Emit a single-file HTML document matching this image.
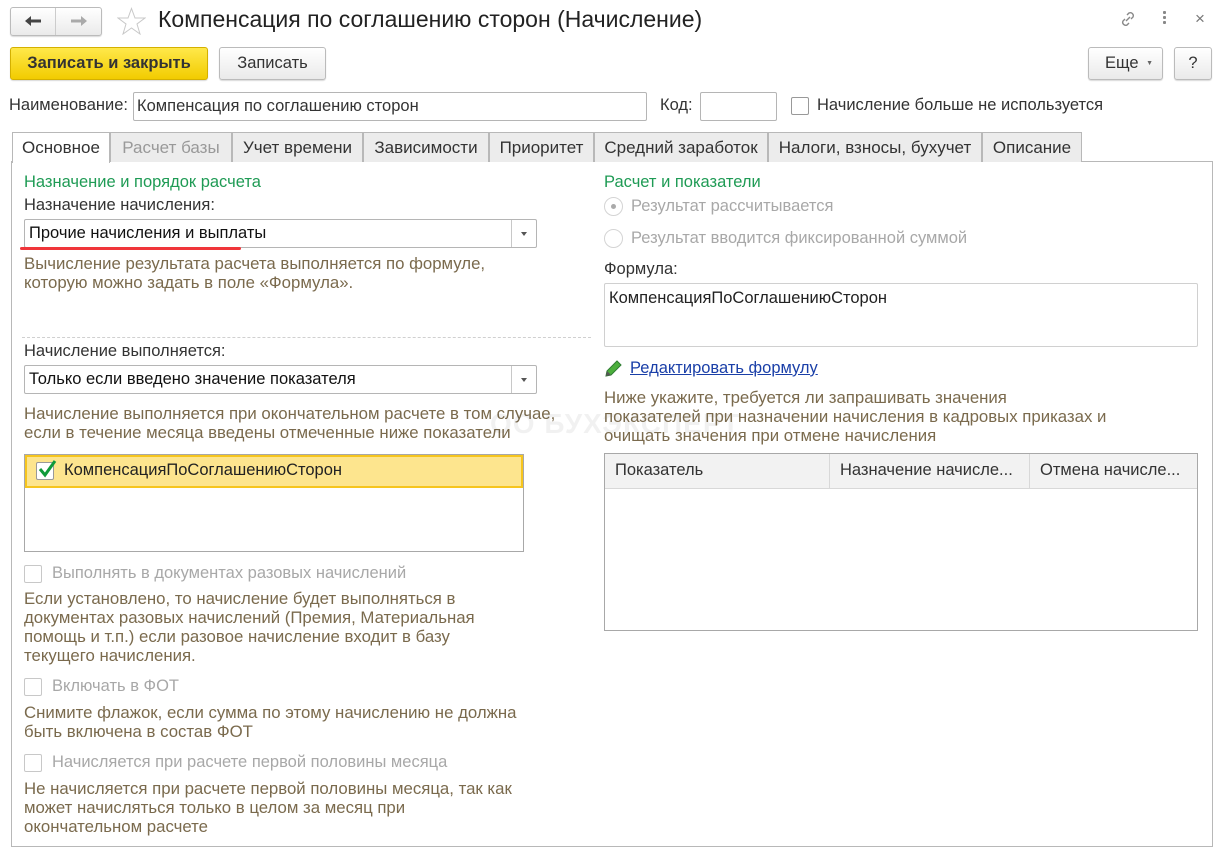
<!DOCTYPE html>
<html><head><meta charset="utf-8"><style>
*{box-sizing:border-box;margin:0;padding:0}
body{width:1223px;height:850px;background:#fff;font-family:"Liberation Sans",Arial,sans-serif;font-size:16.5px;color:#333;position:relative;overflow:hidden}
.a{position:absolute;white-space:nowrap}
.btn{position:absolute;border:1px solid #bbb;border-radius:3px;background:linear-gradient(#fff,#eaeaea);box-shadow:0 1px 1px rgba(0,0,0,.15);text-align:center;color:#333}
.inp{position:absolute;border:1px solid #b5b5b5;border-radius:2px;background:#fff}
.note{color:#7a6a4d;line-height:19px;font-size:16.8px}
.green{color:#1f9b55}
.gray{color:#a8a8a8}
.cb{position:absolute;width:18px;height:18px;border:1px solid #c8c8c8;border-radius:2px;background:#fff}
.tab{position:absolute;top:132px;height:30px;border:1px solid #b8b8b8;border-bottom:none;background:#ececec;line-height:29px;text-align:center;color:#333;font-size:17px}
.sel .dd{position:absolute;right:0;top:0;width:25px;height:100%;border-left:1px solid #c8c8c8}
.sel .dd:after{content:"";position:absolute;left:9px;top:12px;border:3.5px solid transparent;border-top:4px solid #555}
.radio{position:absolute;width:19px;height:19px;border:1px solid #d4d4d4;border-radius:50%;background:#fff}
</style></head><body>
<!-- nav -->
<div class="btn" style="left:10px;top:7px;width:92px;height:29px"></div>
<div class="a" style="left:55px;top:8px;width:1px;height:27px;background:#ccc"></div>
<svg class="a" style="left:24px;top:14px" width="18" height="14" viewBox="0 0 18 14"><path d="M1 7l6-5v3.5h10v3H7V12z" fill="#444"/></svg>
<svg class="a" style="left:70px;top:14px" width="18" height="14" viewBox="0 0 18 14"><path d="M17 7l-6-5v3.5H1v3h10V12z" fill="#aaa"/></svg>
<svg class="a" style="left:117px;top:7px" width="29" height="28" viewBox="0 0 29 28"><polygon points="14.5,1.5 18,11 28,11 20,17 23,27 14.5,21 6,27 9,17 1,11 11,11" fill="none" stroke="#c8c8c8" stroke-width="1"/></svg>
<div class="a" style="left:158px;top:6px;font-size:23px;color:#222">Компенсация по соглашению сторон (Начисление)</div>
<svg class="a" style="left:1118px;top:9px" width="20" height="20" viewBox="0 0 20 20"><g fill="none" stroke="#888" stroke-width="1.4"><path d="M8 12l4-4"/><path d="M9 6l2-2a3 3 0 0 1 4 4l-2 2"/><path d="M11 14l-2 2a3 3 0 0 1-4-4l2-2"/></g></svg>
<div class="a" style="left:1163px;top:11px;width:3px;height:3px;background:#888;box-shadow:0 5px 0 #888,0 10px 0 #888;border-radius:1px"></div>
<div class="a" style="left:1195px;top:9px;font-size:17px;color:#777">×</div>
<!-- buttons -->
<div class="btn" style="left:10px;top:47px;width:198px;height:33px;background:linear-gradient(#ffe84a,#f2cc00);border-color:#d4b000;font-weight:bold;line-height:31px;color:#333">Записать и закрыть</div>
<div class="btn" style="left:219px;top:47px;width:107px;height:33px;line-height:31px">Записать</div>
<div class="btn" style="left:1088px;top:47px;width:75px;height:33px;line-height:31px;text-align:left;padding-left:16px">Еще <span style="font-size:7px;color:#666;margin-left:3px;vertical-align:middle">▼</span></div>
<div class="btn" style="left:1174px;top:47px;width:38px;height:33px;line-height:31px">?</div>
<!-- name row -->
<div class="a" style="left:9px;top:96px">Наименование:</div>
<div class="inp" style="left:133px;top:92px;width:514px;height:29px;padding:4px 0 0 3px">Компенсация по соглашению сторон</div>
<div class="a" style="left:660px;top:96px">Код:</div>
<div class="inp" style="left:700px;top:92px;width:77px;height:29px"></div>
<div class="cb" style="left:791px;top:97px;border-color:#999"></div>
<div class="a" style="left:817px;top:96px">Начисление больше не используется</div>
<!-- panel -->
<div class="a" style="left:11px;top:161px;width:1202px;height:686px;border:1px solid #b8b8b8"></div>
<div class="tab" style="left:12px;width:98px;background:#fff;height:31px;z-index:2">Основное</div>
<div class="tab" style="left:110px;width:122px;color:#999">Расчет базы</div>
<div class="tab" style="left:232px;width:131px">Учет времени</div>
<div class="tab" style="left:363px;width:126px">Зависимости</div>
<div class="tab" style="left:489px;width:105px">Приоритет</div>
<div class="tab" style="left:594px;width:174px">Средний заработок</div>
<div class="tab" style="left:768px;width:214px">Налоги, взносы, бухучет</div>
<div class="tab" style="left:982px;width:100px">Описание</div>
<!-- left column -->
<div class="a green" style="left:24px;top:173px">Назначение и порядок расчета</div>
<div class="a" style="left:24px;top:196px">Назначение начисления:</div>
<div class="inp sel" style="left:24px;top:219px;width:513px;height:29px;padding:4px 0 0 4px;color:#111">Прочие начисления и выплаты<div class="dd"></div></div>
<div class="a" style="left:20px;top:247px;width:221px;height:3px;background:#f0353a;border-radius:2px"></div>
<div class="a note" style="left:24px;top:254px">Вычисление результата расчета выполняется по формуле,<br>которую можно задать в поле «Формула».</div>
<div class="a" style="left:22px;top:337px;width:569px;border-top:1px dashed #d0d0d0"></div>
<div class="a" style="left:24px;top:342px">Начисление выполняется:</div>
<div class="inp sel" style="left:24px;top:365px;width:513px;height:29px;padding:4px 0 0 4px;color:#111">Только если введено значение показателя<div class="dd"></div></div>
<div class="a note" style="left:24px;top:404px">Начисление выполняется при окончательном расчете в том случае,<br>если в течение месяца введены отмеченные ниже показатели</div>
<div class="a" style="left:24px;top:454px;width:500px;height:98px;border:1px solid #a8a8a8"></div>
<div class="a" style="left:25px;top:455px;width:498px;height:33px;background:#fde58e;border:2px solid #f6c51e"></div>
<div class="cb" style="left:36px;top:462px;border-color:#999"></div>
<svg class="a" style="left:37px;top:459px" width="20" height="20" viewBox="0 0 20 20"><path d="M3 10l5 6L18 2" fill="none" stroke="#0f9a3a" stroke-width="3"/></svg>
<div class="a" style="left:64px;top:461px;color:#222">КомпенсацияПоСоглашениюСторон</div>
<div class="cb" style="left:24px;top:565px"></div>
<div class="a gray" style="left:52px;top:564px">Выполнять в документах разовых начислений</div>
<div class="a note" style="left:24px;top:589px">Если установлено, то начисление будет выполняться в<br>документах разовых начислений (Премия, Материальная<br>помощь и т.п.) если разовое начисление входит в базу<br>текущего начисления.</div>
<div class="cb" style="left:24px;top:678px"></div>
<div class="a gray" style="left:52px;top:677px">Включать в ФОТ</div>
<div class="a note" style="left:24px;top:703px">Снимите флажок, если сумма по этому начислению не должна<br>быть включена в состав ФОТ</div>
<div class="cb" style="left:24px;top:754px"></div>
<div class="a gray" style="left:52px;top:753px">Начисляется при расчете первой половины месяца</div>
<div class="a note" style="left:24px;top:779px">Не начисляется при расчете первой половины месяца, так как<br>может начисляться только в целом за месяц при<br>окончательном расчете</div>
<!-- watermark -->
<div class="a" style="left:490px;top:408px;font-size:28px;font-weight:bold;color:#000;opacity:.05;letter-spacing:1px">ОО БУХЭКСПЕРТ</div>
<!-- right column -->
<div class="a green" style="left:604px;top:173px">Расчет и показатели</div>
<div class="radio" style="left:604px;top:197px"></div>
<div class="a" style="left:611px;top:204px;width:5px;height:5px;border-radius:50%;background:#aaa"></div>
<div class="a gray" style="left:631px;top:197px">Результат рассчитывается</div>
<div class="radio" style="left:604px;top:229px"></div>
<div class="a gray" style="left:631px;top:229px">Результат вводится фиксированной суммой</div>
<div class="a" style="left:604px;top:260px">Формула:</div>
<div class="inp" style="left:604px;top:283px;width:594px;height:64px;border-color:#d0d0d0;padding:5px 0 0 4px;color:#222">КомпенсацияПоСоглашениюСторон</div>
<svg class="a" style="left:603px;top:359px" width="20" height="20" viewBox="0 0 20 20"><path d="M3 17l1-5L14 2l4 4L8 16z" fill="#4caf3c" stroke="#2e7d32" stroke-width="1"/><path d="M3 17l1-5 4 4z" fill="#555"/></svg>
<div class="a" style="left:630px;top:359px;color:#1a3fa8;text-decoration:underline">Редактировать формулу</div>
<div class="a note" style="left:604px;top:388px">Ниже укажите, требуется ли запрашивать значения<br>показателей при назначении начисления в кадровых приказах и<br>очищать значения при отмене начисления</div>
<div class="a" style="left:604px;top:453px;width:594px;height:178px;border:1px solid #a8a8a8"></div>
<div class="a" style="left:605px;top:454px;width:592px;height:35px;background:#f2f2f2;border-bottom:1px solid #d8d8d8"></div>
<div class="a" style="left:829px;top:454px;width:1px;height:35px;background:#d8d8d8"></div>
<div class="a" style="left:1029px;top:454px;width:1px;height:35px;background:#d8d8d8"></div>
<div class="a" style="left:615px;top:461px">Показатель</div>
<div class="a" style="left:840px;top:461px">Назначение начисле...</div>
<div class="a" style="left:1040px;top:461px">Отмена начисле...</div>
</body></html>
